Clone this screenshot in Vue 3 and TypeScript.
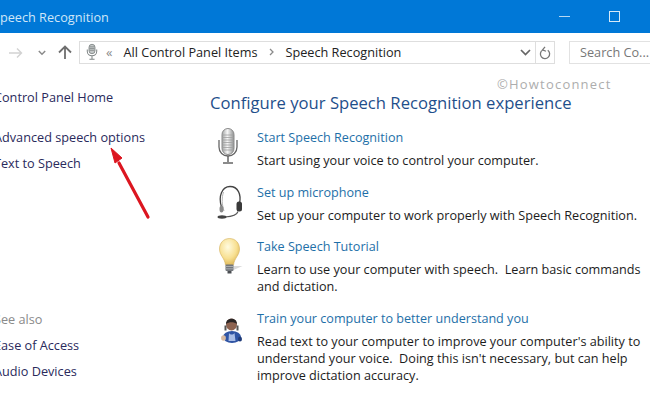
<script setup lang="ts">
interface Task { title: string; desc: string; icon: string }
const tasks: Task[] = [
  { title: 'Start Speech Recognition', desc: 'Start using your voice to control your computer.', icon: 'mic' },
  { title: 'Set up microphone', desc: 'Set up your computer to work properly with Speech Recognition.', icon: 'headset' },
  { title: 'Take Speech Tutorial', desc: 'Learn to use your computer with speech.  Learn basic commands and dictation.', icon: 'bulb' },
  { title: 'Train your computer to better understand you', desc: "Read text to your computer to improve your computer's ability to understand your voice.  Doing this isn't necessary, but can help improve dictation accuracy.", icon: 'person' },
]
</script>

<template>
  <div class="window">
    <header class="titlebar">
      <span class="title">Speech Recognition</span>
      <div class="caption">
        <span class="min"></span>
        <span class="max"></span>
      </div>
    </header>
    <nav class="toolbar">
      <svg class="nav-ic fwd" width="14" height="12" viewBox="0 0 14 12"><path d="M0 6h12.500M8 1.500 12.500 6 8 10.500" fill="none" stroke="#d2d2d2" stroke-width="1.400"/></svg>
      <svg class="nav-ic drop" width="8" height="6" viewBox="0 0 8 6"><path d="M.8 1l3.200 3.200L7.200 1" fill="none" stroke="#8a8a8a" stroke-width="1.500"/></svg>
      <svg class="nav-ic up" width="14" height="14" viewBox="0 0 14 14"><path d="M7 14V1.500M1 7.500 7 1.500l6 6" fill="none" stroke="#6e6e6e" stroke-width="1.800"/></svg>
      <div class="address">
        <svg class="addr-mic" width="12" height="18" viewBox="0 0 14 20">
          <rect x="3.500" y="1" width="7" height="11" rx="3.500" fill="#c4c8c8" stroke="#7f8585"/>
          <path d="M4 4h6M4 6h6M4 8h6" stroke="#858a8a"/>
          <path d="M1.500 7v2.500a5.500 5 0 0 0 11 0V7M7 14.500V18M4 18.500h6" fill="none" stroke="#7f8585" stroke-width="1.200"/>
        </svg>
        <span class="chev">«</span>
        <span class="crumb">All Control Panel Items</span>
        <svg class="sep" width="6" height="8" viewBox="0 0 6 8"><path d="M1 1l3 3-3 3" fill="none" stroke="#8a8a8a" stroke-width="1.300"/></svg>
        <span class="crumb">Speech Recognition</span>
        <svg class="addr-drop" width="11" height="7" viewBox="0 0 11 7"><path d="M1 1l4.500 4.500L10 1" fill="none" stroke="#666" stroke-width="1.700"/></svg>
        <span class="refresh">
          <svg width="12" height="14" viewBox="0 0 13 15"><path d="M4 4.200A5 5 0 1 0 9.500 4.500M6.500 .8 3.800 4.200 7.600 5.600" fill="none" stroke="#777" stroke-width="1.400"/></svg>
        </span>
      </div>
      <div class="search">Search Co...</div>
    </nav>
    <div class="content">
      <aside class="side">
        <a class="home">Control Panel Home</a>
        <a class="adv">Advanced speech options</a>
        <a class="tts">Text to Speech</a>
        <div class="see">See also</div>
        <a class="ease">Ease of Access</a>
        <a class="audio">Audio Devices</a>
      </aside>
      <main class="main">
        <h1>Configure your Speech Recognition experience</h1>
        <section v-for="t in tasks" :key="t.title" class="task" :class="t.icon">
          <div class="icon">
            <svg v-if="t.icon === 'mic'" width="20" height="36" viewBox="0 0 20 36">
              <defs><linearGradient id="mg" x1="0" x2="1"><stop offset="0" stop-color="#a2a4a4"/><stop offset=".45" stop-color="#f6f6f6"/><stop offset="1" stop-color="#8f9191"/></linearGradient></defs>
              <rect x="4" y=".5" width="12" height="26" rx="6" fill="url(#mg)" stroke="#8a8a8a"/>
              <path d="M4.500 7h11M4.500 9.500h11M4.500 12h11M4.500 14.500h11M4.500 17h11M4.500 19.500h11M4.500 22h11" stroke="#a0a0a0" stroke-width=".8"/>
              <path d="M1 12v7c0 5.500 4 9 9 9s9-3.500 9-9v-7" fill="none" stroke="#666" stroke-width="1.300"/>
              <path d="M10 28v6M5 35h10" stroke="#666" stroke-width="1.500"/>
            </svg>
            <svg v-else-if="t.icon === 'headset'" width="26" height="34" viewBox="0 0 26 34">
              <path d="M4.500 22C1 11 5 1.500 13 1.500s11.500 8 9.500 17" fill="none" stroke="#444" stroke-width="1.300"/>
              <path d="M6.500 7C4.500 13 5 20 7 26" fill="none" stroke="#b5b5b5" stroke-width="1"/>
              <rect x="19.500" y="16.500" width="5.500" height="10" rx="2.500" fill="#3a3a3a"/>
              <path d="M21 26.500c-1 3.500-6 5-13 5.500" fill="none" stroke="#555" stroke-width="1.100"/>
              <ellipse cx="5" cy="32" rx="4.500" ry="1.700" fill="#444"/>
              <ellipse cx="4.500" cy="24" rx="2" ry="3.500" fill="#8a8a8a"/>
            </svg>
            <svg v-else-if="t.icon === 'bulb'" width="26" height="36" viewBox="0 0 26 36">
              <defs><radialGradient id="bg" cx=".42" cy=".32" r=".72"><stop offset="0" stop-color="#fffbe0"/><stop offset=".6" stop-color="#f8e092"/><stop offset="1" stop-color="#dcb555"/></radialGradient></defs>
              <path d="M14.500 28h9l-9 4z" fill="#dadada"/>
              <path d="M10.500 .5C4.500 .5 .5 5 .5 11c0 6.500 5 8.500 6 16h8c1-7.500 6-9.500 6-16 0-6-4-10.500-10-10.500z" fill="url(#bg)" stroke="#d3b05c" stroke-width=".6"/>
              <rect x="6.500" y="26.500" width="8" height="6.500" rx="1" fill="#73777c"/>
              <path d="M6.500 28.500h8M6.500 30.800h8" stroke="#a9acaf"/>
              <path d="M8.500 33h4v2.500h-4z" fill="#4b4e52"/>
            </svg>
            <svg v-else width="21" height="27" viewBox="0 0 21 27">
              <ellipse cx="11" cy="21" rx="9" ry="6" fill="#2f54a4"/>
              <path d="M8 17c1.500 2 4 2 5.500 0l1 8h-7z" fill="#a9bde6"/>
              <ellipse cx="10.500" cy="8.500" rx="5.500" ry="6" fill="#8d6350"/>
              <path d="M5 8C5 1 16 1 16 8c-3-2.500-8-2.500-11 0z" fill="#2b2626"/>
              <path d="M3.500 9.500h2v5h-2zM15.500 9.500h2v5h-2z" fill="#555"/>
              <ellipse cx="2.500" cy="22" rx="2.400" ry="2.800" fill="#d7b9a0"/>
              <ellipse cx="19" cy="23" rx="2" ry="2.500" fill="#1f3a78"/>
            </svg>
          </div>
          <div class="body">
            <a class="task-title">{{ t.title }}</a>
            <p>{{ t.desc }}</p>
          </div>
        </section>
      </main>
    </div>
    <div class="mark">©Howtoconnect</div>
    <svg class="arrow" width="50" height="76" viewBox="0 0 50 76">
      <path d="M41 71 12 17" stroke="#dc1620" stroke-width="3.200" stroke-linecap="round" fill="none"/>
      <path d="M4 2 15 12 8 17z" fill="#dc1620" stroke="#dc1620" stroke-width="1"/>
    </svg>
  </div>
</template>

<style>
html, body { margin: 0; background: #fff; }
</style>

<style scoped>
.window {
  position: relative;
  width: 650px;
  height: 400px;
  overflow: hidden;
  background: #fff;
  font-family: "Open Sans", "Noto Sans", sans-serif;
  color: #1c1c1c;
}
.titlebar {
  height: 33px;
  background: #0078d7;
  display: flex;
  align-items: center;
  justify-content: space-between;
}
.title {
  margin-left: -7px;
  font-size: 12.7px;
  color: #cfe6f8;
}
.caption {
  display: flex;
  align-items: center;
  margin-right: 30px;
}
.min {
  width: 11px;
  height: 1px;
  background: #b5d8f3;
  margin-right: 39px;
}
.max {
  width: 9px;
  height: 9px;
  border: 1px solid #d5e9f8;
}
.toolbar {
  height: 23px;
  margin-top: 8px;
  display: flex;
  align-items: center;
}
.nav-ic { flex: none; }
.fwd { margin-left: 9px; }
.drop { margin-left: 15px; }
.up { margin-left: 12px; margin-top: -1px; }
.address {
  margin-left: 7px;
  width: 476px;
  height: 23px;
  box-sizing: border-box;
  border: 1px solid #dedede;
  display: flex;
  align-items: center;
  font-size: 12.7px;
  line-height: 19px;
  padding-bottom: 1px;
  color: #222;
  flex: none;
}
.addr-mic { margin-left: 6px; flex: none; }
.chev { margin-left: 8px; color: #8a8a8a; font-size: 13px; }
.crumb { white-space: nowrap; }
.chev + .crumb { margin-left: 11px; }
.sep { margin: 0 11px 0 11px; flex: none; }
.addr-drop { margin-left: auto; margin-right: 4px; flex: none; }
.refresh {
  width: 18px;
  height: 21px;
  margin-bottom: -1px;
  border-left: 1px solid #dedede;
  display: flex;
  align-items: center;
  justify-content: center;
  flex: none;
}
.search {
  margin-left: 14px;
  flex: 1;
  height: 23px;
  box-sizing: border-box;
  border: 1px solid #e2e2e2;
  border-right: 0;
  padding-left: 10px;
  line-height: 21px;
  font-size: 12.7px;
  color: #777;
  white-space: nowrap;
  overflow: hidden;
}
.content { display: flex; }
.side {
  width: 210px;
  margin-left: -6px;
  padding-right: 6px;
  flex: none;
  display: flex;
  flex-direction: column;
  font-size: 12.7px;
  color: #2a2a5c;
  line-height: 17px;
  padding-top: 25px;
}
.side a { display: block; white-space: nowrap; }
.adv { margin-top: 23px; }
.tts { margin-top: 9px; }
.see { margin-top: 139px; color: #8a8a8a; }
.ease { margin-top: 9px; }
.audio { margin-top: 9px; }
.main { flex: 1; min-width: 0; }
h1 {
  margin: 27px 0 0;
  font-size: 16.65px;
  font-weight: 400;
  line-height: 24px;
  color: #1f4f8b;
  white-space: nowrap;
}
.task { display: flex; }
.icon { width: 47px; flex: none; display: flex; align-items: flex-start; }
.body { flex: 1; min-width: 0; padding-right: 4px; }
.task-title {
  display: block;
  font-size: 12.6px;
  line-height: 17px;
  color: #1e6fa8;
  white-space: nowrap;
}
p {
  margin: 6px 0 0;
  font-size: 12.65px;
  line-height: 17px;
  color: #1c1c1c;
  white-space: pre-wrap;
}
.mic { margin-top: 14px; height: 40px; }
.mic svg { margin: -1px 0 0 8px; }
.headset { margin-top: 15px; height: 39px; }
.headset svg { margin: 1px 0 0 7px; }
.bulb { margin-top: 15px; height: 57px; }
.bulb svg { margin: 0 0 0 9px; }
.person { margin-top: 15px; }
.person svg { margin: 6px 0 0 11px; }
.mark {
  position: absolute;
  left: 497px;
  top: 74px;
  font-size: 13px;
  letter-spacing: 1.2px;
  line-height: 20px;
  color: #adadad;
}
.arrow {
  position: absolute;
  left: 107px;
  top: 146px;
}
</style>
